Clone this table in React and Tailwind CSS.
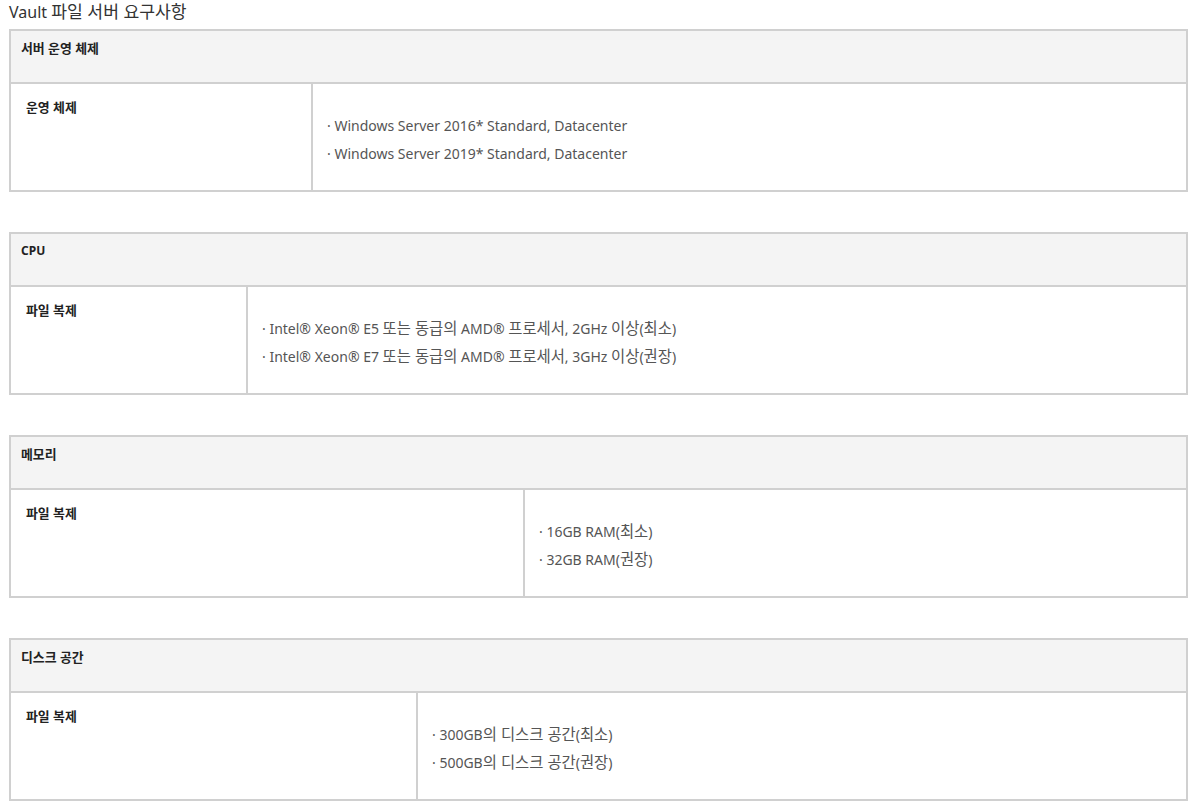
import React from "react";

const sections = [
  {
    title: "서버 운영 체제",
    label: "운영 체제",
    labelWidth: "w-[300px]",
    items: [
      "Windows Server 2016* Standard, Datacenter",
      "Windows Server 2019* Standard, Datacenter",
    ],
  },
  {
    title: "CPU",
    label: "파일 복제",
    labelWidth: "w-[235px]",
    items: [
      "Intel® Xeon® E5 또는 동급의 AMD® 프로세서, 2GHz 이상(최소)",
      "Intel® Xeon® E7 또는 동급의 AMD® 프로세서, 3GHz 이상(권장)",
    ],
  },
  {
    title: "메모리",
    label: "파일 복제",
    labelWidth: "w-[512px]",
    items: ["16GB RAM(최소)", "32GB RAM(권장)"],
  },
  {
    title: "디스크 공간",
    label: "파일 복제",
    labelWidth: "w-[405px]",
    items: ["300GB의 디스크 공간(최소)", "500GB의 디스크 공간(권장)"],
  },
];

// hangul runs render a touch bigger than the latin text around them
function Txt({ children, big }) {
  const parts = children.split(/([가-힣]+(?:\s+[가-힣]+)*)/);
  return parts.map((p, i) =>
    /[가-힣]/.test(p) ? (
      <span key={i} className={big ? "text-[1.1em]" : "text-[1.075em]"}>
        {p}
      </span>
    ) : (
      p
    )
  );
}

function SpecTable({ title, label, labelWidth, items }) {
  return (
    <div className="border-2 border-[#d0d0d0]">
      {/* header */}
      <div className="h-[51px] bg-[#f4f4f4] px-[10px] pt-[8px] text-[12px] font-bold leading-[18px] text-[#222]">
        <Txt>{title}</Txt>
      </div>
      {/* body */}
      <div className="flex border-t-2 border-[#d0d0d0]">
        <div
          className={`${labelWidth} shrink-0 pl-[15px] pt-[14px] text-[12px] font-bold leading-[18px] text-[#222]`}
        >
          <Txt>{label}</Txt>
        </div>
        <div className="h-[106px] flex-1 border-l-2 border-[#d0d0d0] pl-[14px] pt-[28px] text-[14px] leading-[28px] text-[#555]">
          {items.map((item) => (
            <div key={item}>
              · <Txt big>{item}</Txt>
            </div>
          ))}
        </div>
      </div>
    </div>
  );
}

export default function App() {
  return (
    <div
      className="min-h-screen bg-white px-[9px] pt-[1px]"
      style={{ fontFamily: "'Noto Sans', 'Noto Sans CJK KR', sans-serif" }}
    >
      <h1 className="mb-[6px] text-[16px] leading-[22px] text-[#333]">
        <Txt>Vault 파일 서버 요구사항</Txt>
      </h1>
      <div className="flex w-[1179px] flex-col gap-[40px]">
        {sections.map((s) => (
          <SpecTable key={s.title} {...s} />
        ))}
      </div>
    </div>
  );
}
